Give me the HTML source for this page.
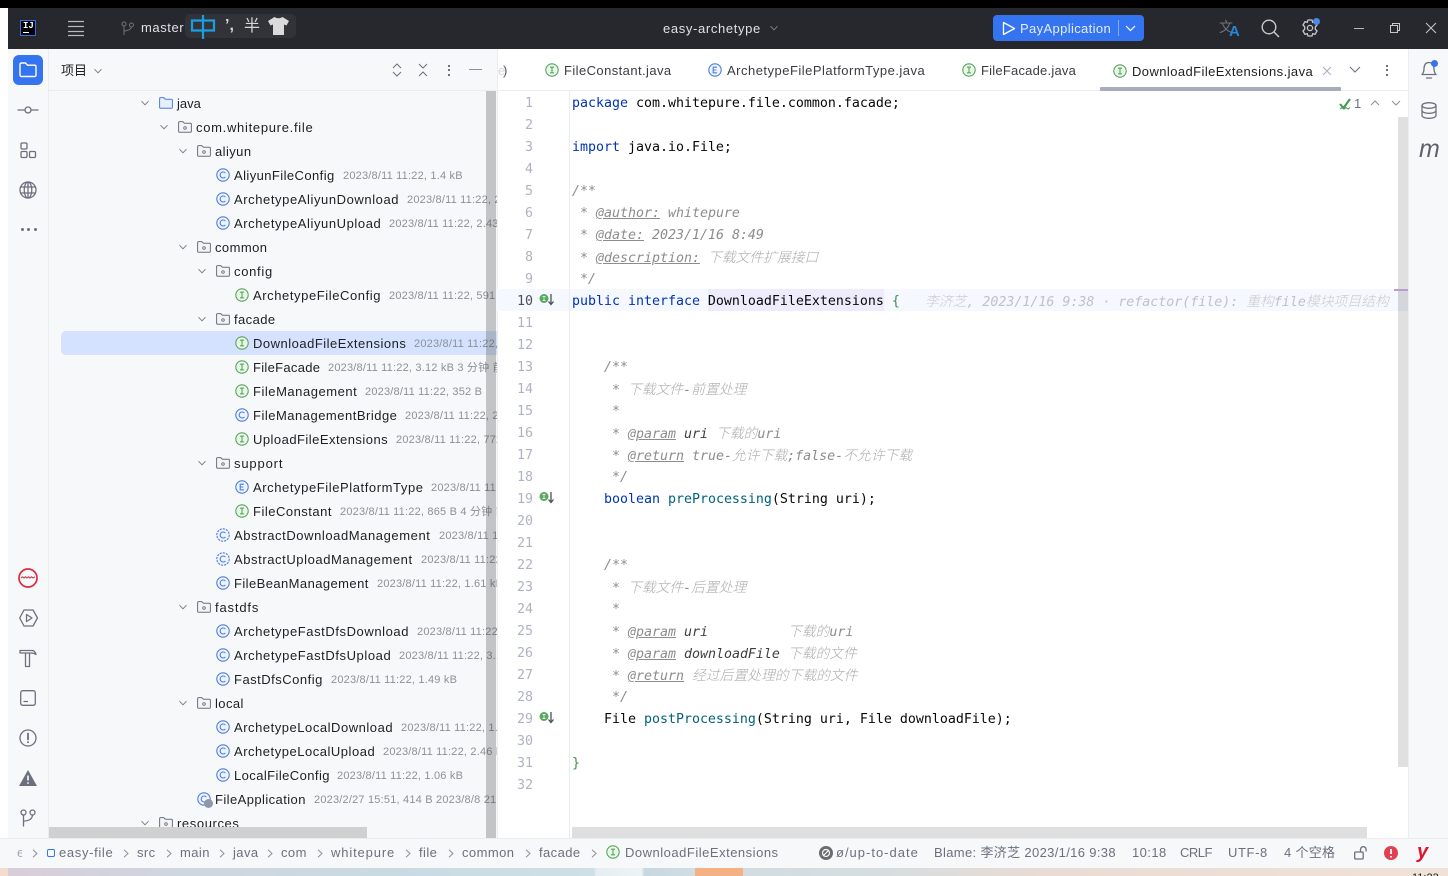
<!DOCTYPE html>
<html lang="zh"><head><meta charset="utf-8"><title>easy-archetype</title>
<style>
*{box-sizing:border-box}
html,body{margin:0;padding:0;width:1448px;height:876px;overflow:hidden;background:#fff}
body{position:relative;font-family:"Liberation Sans","Noto Sans CJK SC",sans-serif;font-size:13px;color:#1e1f22}
.a{position:absolute}
.t{position:absolute;white-space:nowrap;letter-spacing:.42px;line-height:24px;height:24px;margin-top:1px}
svg{position:absolute;overflow:visible}
.s{fill:none;stroke:#6c707e;stroke-width:1.3;stroke-linecap:round;stroke-linejoin:round}
#tree{position:absolute;left:49px;top:91px;width:448px;height:747px;overflow:hidden;background:#f7f8fa}
#tree .t{margin-left:-49px;margin-top:-90px}
#tree svg{margin-left:-49px;margin-top:-91px}
#tree .m{color:#8d9097;font-size:11px;letter-spacing:.2px}
#tree .w{letter-spacing:.58px}
.l{position:absolute;left:572px;height:22px;white-space:pre;font:13.29px/22px "DejaVu Sans Mono","Noto Sans CJK SC",monospace;color:#080808;margin-top:2px}
.n{position:absolute;left:505px;width:28px;text-align:right;font:13.29px/22px "DejaVu Sans Mono",monospace;color:#aeb3c2;margin-top:2px}
.k{color:#0033b3}.f{color:#00627a}
.c{color:#8c8c8c;font-style:italic}
.g{color:#8c8c8c;font-style:italic;text-decoration:underline}
.u{color:#3d3d3d;font-style:italic}
.z{font-size:13.8px;color:#adadad;font-weight:300}
.st{position:absolute;white-space:nowrap;top:838px;height:30px;line-height:30px;font-size:13px;color:#6c707e;letter-spacing:.42px}
.cv{position:absolute;top:849px;width:6px;height:9px}
</style></head><body>
<svg width="0" height="0" style="position:absolute">
<defs>
<symbol id="ci" viewBox="0 0 14 14"><circle cx="7" cy="7" r="6.200" fill="#eaf6ea" stroke="#58a65c" stroke-width="1.100"/><path d="M5 4.200h4M7 4.200v5.600M5 9.800h4" stroke="#58a65c" fill="none" stroke-width="1.100"/></symbol>
<symbol id="cc" viewBox="0 0 14 14"><circle cx="7" cy="7" r="6.200" fill="#eef3ff" stroke="#4d7fd8" stroke-width="1.100"/><path d="M9.400 5A3 3 0 1 0 9.400 9" stroke="#4d7fd8" fill="none" stroke-width="1.100"/></symbol>
<symbol id="ca" viewBox="0 0 14 14"><circle cx="7" cy="7" r="6.200" fill="#eef3ff" stroke="#4d7fd8" stroke-width="1.100" stroke-dasharray="2.200 1"/><path d="M9.400 5A3 3 0 1 0 9.400 9" stroke="#4d7fd8" fill="none" stroke-width="1.100"/></symbol>
<symbol id="ce" viewBox="0 0 14 14"><circle cx="7" cy="7" r="6.200" fill="#eef3ff" stroke="#4d7fd8" stroke-width="1.100"/><path d="M9 4.200H5.200v5.600H9M5.200 7h3.200" stroke="#4d7fd8" fill="none" stroke-width="1.100"/></symbol>
<symbol id="fd" viewBox="0 0 14 14"><path d="M.6 11.200V2.600q0-1 1-1h3.200l1.600 1.600h6q1 0 1 1v7q0 1-1 1H1.600q-1 0-1-1z" fill="#f3f4f6" stroke="#6c707e" stroke-width="1"/><circle cx="7" cy="8" r="1.300" fill="none" stroke="#6c707e" stroke-width=".9"/></symbol>
<symbol id="fj" viewBox="0 0 14 14"><path d="M.6 11.200V2.600q0-1 1-1h3.200l1.600 1.600h6q1 0 1 1v7q0 1-1 1H1.600q-1 0-1-1z" fill="#e7effd" stroke="#4d7fd8" stroke-width="1"/></symbol>
<symbol id="dn" viewBox="0 0 10 10"><path d="M1.500 3.200 5 6.800l3.500-3.600" fill="none" stroke="#7c7f88" stroke-width="1"/></symbol>
<symbol id="rt" viewBox="0 0 6 9"><path d="M1 .8 5 4.500 1 8.200" fill="none" stroke="#8c8f98" stroke-width="1"/></symbol>
</defs></svg>

<!-- top black edge & title bar -->
<div class="a" style="left:0;top:0;width:1448px;height:8px;background:#000"></div>
<div class="a" style="left:8px;top:8px;width:1440px;height:41px;background:#26282e"></div>
<div class="a" style="left:20px;top:20px;width:16px;height:16px;background:#000;border:1px solid #2f6fe0"></div>
<div class="a" style="left:23px;top:20px;color:#fff;font:bold 9px/13px 'Liberation Mono',monospace;letter-spacing:0">IJ</div>
<div class="a" style="left:23px;top:32px;width:6px;height:1px;background:#fff"></div>
<svg style="left:68px;top:20px" width="16" height="16"><path d="M0 1.500h16M0 6.500h16M0 11.500h16M0 15.500h16" stroke="#b4b8bf" stroke-width="1.200" fill="none"/></svg>
<svg style="left:121px;top:21px" width="13" height="15"><g style="stroke:#6f737a;fill:none;stroke-width:1"><circle cx="3" cy="3" r="2"/><circle cx="10.500" cy="4" r="2"/><path d="M3 5v9M3 10q6.500-.5 7.500-4"/></g></svg>
<div class="t" style="left:141px;top:15px;color:#dfe1e5;letter-spacing:.58px">master</div>
<div class="a" style="left:185px;top:14px;width:111px;height:24px;background:#313338;border-radius:5px"></div>
<svg style="left:190px;top:14px" width="26" height="26"><path d="M2 6.500h22v10H2zM13 1v24" fill="none" stroke="#1b9fe0" stroke-width="2.200"/></svg>
<div class="a" style="left:225px;top:14px;color:#d8d8d8;font-size:16px;line-height:24px;font-weight:bold">&#8217;,</div>
<div class="a" style="left:244px;top:16px;color:#d8d8d8;font-size:16px;line-height:22px">半</div>
<svg style="left:268px;top:17px" width="21" height="18"><path d="M6.500 0 0 4l2.500 4.500 2.500-1V18h11V7.500l2.500 1L21 4l-6.500-4q-4 2.500-8 0z" fill="#dadada"/></svg>
<div class="t" style="left:663px;top:16px;color:#dfe1e5;letter-spacing:.64px">easy-archetype</div>
<svg style="left:769px;top:23px" width="10" height="10"><use href="#dn"/></svg>
<div class="a" style="left:993px;top:15px;width:151px;height:26px;background:#3574f0;border-radius:4px"></div>
<svg style="left:1002px;top:21px" width="14" height="15"><path d="M1.500 1.500v12l11-6z" fill="none" stroke="#fff" stroke-width="1.300" stroke-linejoin="round"/></svg>
<div class="t" style="left:1020px;top:16px;color:#e4ecfd;letter-spacing:.36px">PayApplication</div>
<div class="a" style="left:1118px;top:20px;width:1px;height:16px;background:#85a9f3"></div>
<svg style="left:1125px;top:23px" width="11" height="11"><path d="M1 3l4.500 4.500L10 3" fill="none" stroke="#fff" stroke-width="1.200"/></svg>
<div class="a" style="left:1219px;top:18px;color:#6f737a;font-size:14px;line-height:18px">文</div>
<div class="a" style="left:1229px;top:24px;color:#2187d6;font:bold 15px/16px 'Liberation Sans',sans-serif">A</div>
<svg style="left:1261px;top:19px" width="19" height="19"><circle cx="8" cy="8" r="6.800" fill="none" stroke="#c5c8ce" stroke-width="1.400"/><path d="M13 13l5 5" stroke="#c5c8ce" stroke-width="1.500"/></svg>
<svg style="left:1301px;top:19px" width="18" height="18"><path d="M7 1h4l.7 2.400 2.300-.8 2 3.400-1.700 1.800 0 2.400 1.700 1.800-2 3.400-2.300-.8L11 17H7l-.7-2.400-2.300.8-2-3.400 1.700-1.800 0-2.400L2 6l2-3.400 2.300.8z" fill="none" stroke="#c5c8ce" stroke-width="1.300" stroke-linejoin="round"/><circle cx="9" cy="9" r="2.600" fill="none" stroke="#c5c8ce" stroke-width="1.300"/></svg>
<div class="a" style="left:1313px;top:18px;width:7px;height:7px;background:#4d8ae8;border-radius:50%"></div>
<div class="a" style="left:1354px;top:28px;width:10px;height:1px;background:#b4b8bf"></div>
<svg style="left:1390px;top:23px" width="10" height="10"><path d="M.5 2.500h7v7h-7zM2.500 2.500V.5h7v7H7.500" fill="none" stroke="#c5c8ce"/></svg>
<svg style="left:1426px;top:23px" width="10" height="10"><path d="M0 0l10 10M10 0L0 10" stroke="#c5c8ce" stroke-width="1"/></svg>

<!-- left tool strip -->
<div class="a" style="left:8px;top:49px;width:41px;height:789px;background:#f7f8fa;border-right:1px solid #ebecf0"></div>
<div class="a" style="left:13px;top:55px;width:30px;height:30px;background:#3574f0;border-radius:6px"></div>
<svg style="left:19px;top:62px" width="18" height="16"><path d="M1 13V2.500Q1 1 2.500 1h4l2 2.200h7Q17 3.200 17 4.700V13q0 1.500-1.500 1.500h-13Q1 14.500 1 13z" fill="none" stroke="#fff" stroke-width="1.400"/></svg>
<svg style="left:18px;top:103px" width="20" height="14" class="s"><path d="M0 7h6.500M13.500 7H20"/><circle cx="10" cy="7" r="3"/></svg>
<svg style="left:20px;top:142px" width="16" height="16" class="s"><rect x="1" y="1" width="6" height="6" rx="1.200"/><rect x="1" y="9.500" width="6" height="6" rx="1.200"/><rect x="9.500" y="9.500" width="6" height="6" rx="1.200"/></svg>
<svg style="left:19px;top:181px" width="18" height="18" class="s"><circle cx="9" cy="9" r="8"/><ellipse cx="9" cy="9" rx="3.800" ry="8"/><path d="M1.500 6h15M1.500 12h15M9 1v16"/></svg>
<div class="a" style="left:21px;top:228px;width:3px;height:3px;background:#6c707e;border-radius:50%;box-shadow:6px 0 #6c707e,13px 0 #6c707e"></div>
<svg style="left:18px;top:568px" width="20" height="20"><circle cx="10" cy="10" r="9" fill="none" stroke="#d5303f" stroke-width="1.700"/><path d="M3 10l1.500-1.200L6 10l1.500-1.200L9 10l1.500-1.200L12 10l1.500-1.200L15 10l2-1.200" fill="none" stroke="#d5303f" stroke-width="1"/></svg>
<svg style="left:19px;top:609px" width="19" height="18" class="s"><path d="M5 1h9l4.500 8-4.500 8H5L.7 9z"/><path d="M7.500 5.500v7l5.500-3.500z"/></svg>
<svg style="left:19px;top:648px" width="18" height="20" class="s"><path d="M1 2.500h12q3 0 4 4q-2-1.500-5-1.500H1zM6.500 5v13.500h4V5"/></svg>
<svg style="left:20px;top:690px" width="16" height="16" class="s"><rect x=".7" y=".7" width="14.600" height="14.600" rx="2"/><path d="M4 11.500h3.500"/></svg>
<svg style="left:19px;top:729px" width="18" height="18" class="s"><circle cx="9" cy="9" r="8"/><path d="M9 4.500v6M9 13v.4" stroke-width="1.800"/></svg>
<svg style="left:19px;top:770px" width="18" height="16"><path d="M9 0l9 16H0z" fill="#6c707e"/><path d="M9 5.500v5M9 12.300v1.400" stroke="#fff" stroke-width="1.600"/></svg>
<svg style="left:20px;top:809px" width="16" height="18" class="s"><circle cx="3.500" cy="3.500" r="2.500"/><circle cx="12.500" cy="3.500" r="2.500"/><path d="M3.500 6v11M3.500 12q8.500 0 9-6"/></svg>

<!-- project header -->
<div class="a" style="left:49px;top:49px;width:448px;height:42px;background:#f7f8fa;border-bottom:1px solid #ebecf0"></div>
<div class="a" style="left:61px;top:61px;font-size:13px;line-height:20px;color:#1e1f22">项目</div>
<svg style="left:93px;top:66px" width="10" height="10"><use href="#dn"/></svg>
<svg style="left:392px;top:63px" width="10" height="14"><path d="M1 5l4-4 4 4M1 9l4 4 4-4" fill="none" stroke="#6c707e"/></svg>
<svg style="left:418px;top:63px" width="10" height="14"><path d="M1 1l4 4 4-4M1 13l4-4 4 4" fill="none" stroke="#6c707e"/></svg>
<div class="a" style="left:448px;top:65px;width:2px;height:2px;background:#6c707e;box-shadow:0 4px #6c707e,0 9px #6c707e"></div>
<div class="a" style="left:469px;top:69px;width:13px;height:1px;background:#8c8f98"></div>

<!-- tree -->
<div id="tree">
<div class="t" style="left:61px;top:331px;width:436px;height:24px;background:#d4e2ff;border-radius:5px 0 0 5px;margin-top:-91px"></div>

<svg style="left:140px;top:98px" width="10" height="10"><use href="#dn"/></svg><svg style="left:159px;top:96px" width="14" height="14"><use href="#fj"/></svg><div class="t" style="left:177px;top:91px;letter-spacing:0">java</div>
<svg style="left:159px;top:122px" width="10" height="10"><use href="#dn"/></svg><svg style="left:178px;top:120px" width="14" height="14"><use href="#fd"/></svg><div class="t" style="left:196px;top:115px;letter-spacing:.7px">com.whitepure.file</div>
<svg style="left:178px;top:146px" width="10" height="10"><use href="#dn"/></svg><svg style="left:197px;top:144px" width="14" height="14"><use href="#fd"/></svg><div class="t" style="left:215px;top:139px">aliyun</div>

<svg style="left:216px;top:168px" width="14" height="14"><use href="#cc"/></svg><div class="t" style="left:234px;top:163px">AliyunFileConfig</div><div class="t m" style="left:343px;top:163px">2023/8/11 11:22, 1.4 kB</div>
<svg style="left:216px;top:192px" width="14" height="14"><use href="#cc"/></svg><div class="t w" style="left:234px;top:187px">ArchetypeAliyunDownload</div><div class="t m" style="left:407px;top:187px">2023/8/11 11:22, 2.03 kB</div>
<svg style="left:216px;top:216px" width="14" height="14"><use href="#cc"/></svg><div class="t w" style="left:234px;top:211px">ArchetypeAliyunUpload</div><div class="t m" style="left:389px;top:211px">2023/8/11 11:22, 2.43 kB</div>

<svg style="left:178px;top:242px" width="10" height="10"><use href="#dn"/></svg><svg style="left:197px;top:240px" width="14" height="14"><use href="#fd"/></svg><div class="t" style="left:215px;top:235px">common</div>
<svg style="left:197px;top:266px" width="10" height="10"><use href="#dn"/></svg><svg style="left:216px;top:264px" width="14" height="14"><use href="#fd"/></svg><div class="t" style="left:234px;top:259px;letter-spacing:.7px">config</div>
<svg style="left:235px;top:288px" width="14" height="14"><use href="#ci"/></svg><div class="t w" style="left:253px;top:283px">ArchetypeFileConfig</div><div class="t m" style="left:389px;top:283px">2023/8/11 11:22, 591 B</div>
<svg style="left:197px;top:314px" width="10" height="10"><use href="#dn"/></svg><svg style="left:216px;top:312px" width="14" height="14"><use href="#fd"/></svg><div class="t" style="left:234px;top:307px">facade</div>
<svg style="left:235px;top:336px" width="14" height="14"><use href="#ci"/></svg><div class="t" style="left:253px;top:331px;letter-spacing:.5px">DownloadFileExtensions</div><div class="t m" style="left:414px;top:331px">2023/8/11 11:22, 1.2 kB</div>
<svg style="left:235px;top:360px" width="14" height="14"><use href="#ci"/></svg><div class="t" style="left:253px;top:355px;letter-spacing:.3px">FileFacade</div><div class="t m" style="left:328px;top:355px">2023/8/11 11:22, 3.12 kB 3 分钟 前</div>
<svg style="left:235px;top:384px" width="14" height="14"><use href="#ci"/></svg><div class="t" style="left:253px;top:379px;letter-spacing:.53px">FileManagement</div><div class="t m" style="left:365px;top:379px">2023/8/11 11:22, 352 B</div>
<svg style="left:235px;top:408px" width="14" height="14"><use href="#cc"/></svg><div class="t" style="left:253px;top:403px;letter-spacing:.5px">FileManagementBridge</div><div class="t m" style="left:405px;top:403px">2023/8/11 11:22, 2.1 kB</div>
<svg style="left:235px;top:432px" width="14" height="14"><use href="#ci"/></svg><div class="t" style="left:253px;top:427px;letter-spacing:.47px">UploadFileExtensions</div><div class="t m" style="left:396px;top:427px">2023/8/11 11:22, 772 B</div>
<svg style="left:197px;top:458px" width="10" height="10"><use href="#dn"/></svg><svg style="left:216px;top:456px" width="14" height="14"><use href="#fd"/></svg><div class="t" style="left:234px;top:451px;letter-spacing:.85px">support</div>
<svg style="left:235px;top:480px" width="14" height="14"><use href="#ce"/></svg><div class="t w" style="left:253px;top:475px">ArchetypeFilePlatformType</div><div class="t m" style="left:431px;top:475px">2023/8/11 11:22, 1 kB</div>
<svg style="left:235px;top:504px" width="14" height="14"><use href="#ci"/></svg><div class="t" style="left:253px;top:499px;letter-spacing:.5px">FileConstant</div><div class="t m" style="left:340px;top:499px">2023/8/11 11:22, 865 B 4 分钟 前</div>
<svg style="left:216px;top:528px" width="14" height="14"><use href="#ca"/></svg><div class="t w" style="left:234px;top:523px">AbstractDownloadManagement</div><div class="t m" style="left:439px;top:523px">2023/8/11 11:22</div>
<svg style="left:216px;top:552px" width="14" height="14"><use href="#ca"/></svg><div class="t w" style="left:234px;top:547px">AbstractUploadManagement</div><div class="t m" style="left:421px;top:547px">2023/8/11 11:22</div>
<svg style="left:216px;top:576px" width="14" height="14"><use href="#cc"/></svg><div class="t" style="left:234px;top:571px">FileBeanManagement</div><div class="t m" style="left:377px;top:571px">2023/8/11 11:22, 1.61 kB</div>
<svg style="left:178px;top:602px" width="10" height="10"><use href="#dn"/></svg><svg style="left:197px;top:600px" width="14" height="14"><use href="#fd"/></svg><div class="t" style="left:215px;top:595px;letter-spacing:.85px">fastdfs</div>
<svg style="left:216px;top:624px" width="14" height="14"><use href="#cc"/></svg><div class="t w" style="left:234px;top:619px">ArchetypeFastDfsDownload</div><div class="t m" style="left:417px;top:619px">2023/8/11 11:22, 2 kB</div>
<svg style="left:216px;top:648px" width="14" height="14"><use href="#cc"/></svg><div class="t w" style="left:234px;top:643px">ArchetypeFastDfsUpload</div><div class="t m" style="left:399px;top:643px">2023/8/11 11:22, 3.1 kB</div>
<svg style="left:216px;top:672px" width="14" height="14"><use href="#cc"/></svg><div class="t" style="left:234px;top:667px;letter-spacing:.5px">FastDfsConfig</div><div class="t m" style="left:331px;top:667px">2023/8/11 11:22, 1.49 kB</div>
<svg style="left:178px;top:698px" width="10" height="10"><use href="#dn"/></svg><svg style="left:197px;top:696px" width="14" height="14"><use href="#fd"/></svg><div class="t" style="left:215px;top:691px">local</div>
<svg style="left:216px;top:720px" width="14" height="14"><use href="#cc"/></svg><div class="t" style="left:234px;top:715px;letter-spacing:.53px">ArchetypeLocalDownload</div><div class="t m" style="left:401px;top:715px">2023/8/11 11:22, 1.9 kB</div>
<svg style="left:216px;top:744px" width="14" height="14"><use href="#cc"/></svg><div class="t" style="left:234px;top:739px;letter-spacing:.52px">ArchetypeLocalUpload</div><div class="t m" style="left:383px;top:739px">2023/8/11 11:22, 2.46 kB</div>
<svg style="left:216px;top:768px" width="14" height="14"><use href="#cc"/></svg><div class="t" style="left:234px;top:763px">LocalFileConfig</div><div class="t m" style="left:337px;top:763px">2023/8/11 11:22, 1.06 kB</div>
<svg style="left:197px;top:792px" width="14" height="14"><use href="#cc"/></svg><div class="a" style="left:155px;top:708px;width:9px;height:9px;background:#8f98a8;border-radius:50%"></div><div class="t" style="left:215px;top:787px">FileApplication</div><div class="t m" style="left:314px;top:787px">2023/2/27 15:51, 414 B 2023/8/8 21:00</div>
<svg style="left:140px;top:818px" width="10" height="10"><use href="#dn"/></svg><svg style="left:159px;top:816px" width="14" height="14"><use href="#fd"/></svg><div class="t" style="left:177px;top:811px;letter-spacing:.6px">resources</div>

<div class="a" style="left:437px;top:0;width:10px;height:747px;background:rgba(60,60,60,.28)"></div>
<div class="a" style="left:0;top:736px;width:318px;height:11px;background:#d0d0d0"></div>
</div>

<!-- tabs -->
<div class="a" style="left:497px;top:49px;width:911px;height:42px;background:#fff;border-bottom:1px solid #ebecf0;border-left:1px solid #ebecf0"></div>
<div class="t" style="left:498px;top:58px;color:#d5d6d9">e</div><div class="t" style="left:503px;top:58px;color:#55585f">)</div>
<svg style="left:545px;top:63px" width="14" height="14"><use href="#ci"/></svg><div class="t" style="left:564px;top:58px;color:#3a3c42">FileConstant.java</div>
<svg style="left:708px;top:63px" width="14" height="14"><use href="#ce"/></svg><div class="t" style="left:727px;top:58px;color:#3a3c42;letter-spacing:.49px">ArchetypeFilePlatformType.java</div>
<svg style="left:962px;top:63px" width="14" height="14"><use href="#ci"/></svg><div class="t" style="left:981px;top:58px;color:#3a3c42;letter-spacing:.22px">FileFacade.java</div>
<svg style="left:1113px;top:64px" width="14" height="14"><use href="#ci"/></svg><div class="t" style="left:1132px;top:59px">DownloadFileExtensions.java</div>
<svg style="left:1323px;top:67px" width="8" height="8"><path d="M0 0l8 8M8 0L0 8" stroke="#a8adbd"/></svg>
<svg style="left:1349px;top:64px" width="12" height="12"><path d="M1 3l5 5 5-5" fill="none" stroke="#6c707e" stroke-width="1.100"/></svg>
<div class="a" style="left:1386px;top:65px;width:2px;height:2px;background:#6c707e;box-shadow:0 4px #6c707e,0 9px #6c707e"></div>
<div class="a" style="left:1100px;top:87px;width:241px;height:4px;background:#a8adbd;border-radius:1px"></div>

<!-- editor -->
<div class="a" style="left:497px;top:91px;width:911px;height:747px;background:#fff;border-left:1px solid #ebecf0"></div>
<div class="a" style="left:497px;top:289px;width:911px;height:22px;background:#f5f8fe"></div>
<div class="a" style="left:569px;top:91px;width:1px;height:747px;background:#ebecf0"></div>
<div class="a" style="left:708px;top:289px;width:176px;height:22px;background:#edebfc"></div>

<div class="n" style="top:91px">1</div><div class="n" style="top:113px">2</div><div class="n" style="top:135px">3</div><div class="n" style="top:157px">4</div><div class="n" style="top:179px">5</div><div class="n" style="top:201px">6</div><div class="n" style="top:223px">7</div><div class="n" style="top:245px">8</div><div class="n" style="top:267px">9</div><div class="n" style="top:289px;color:#4c4f58">10</div><div class="n" style="top:311px">11</div><div class="n" style="top:333px">12</div><div class="n" style="top:355px">13</div><div class="n" style="top:377px">14</div><div class="n" style="top:399px">15</div><div class="n" style="top:421px">16</div><div class="n" style="top:443px">17</div><div class="n" style="top:465px">18</div><div class="n" style="top:487px">19</div><div class="n" style="top:509px">20</div><div class="n" style="top:531px">21</div><div class="n" style="top:553px">22</div><div class="n" style="top:575px">23</div><div class="n" style="top:597px">24</div><div class="n" style="top:619px">25</div><div class="n" style="top:641px">26</div><div class="n" style="top:663px">27</div><div class="n" style="top:685px">28</div><div class="n" style="top:707px">29</div><div class="n" style="top:729px">30</div><div class="n" style="top:751px">31</div><div class="n" style="top:773px">32</div>

<svg style="left:539px;top:293px" width="16" height="13"><circle cx="5" cy="5.500" r="4.500" fill="#5aa85e"/><path d="M3.500 3.500h3M5 3.500v4M3.500 7.500h3" stroke="#dff0df" stroke-width=".9" fill="none"/><path d="M12 1v10M9.500 8.500 12 11.500l2.500-3" stroke="#4c5058" stroke-width="1.300" fill="none"/></svg>
<svg style="left:539px;top:491px" width="16" height="13"><circle cx="5" cy="5.500" r="4.500" fill="#5aa85e"/><path d="M3.500 3.500h3M5 3.500v4M3.500 7.500h3" stroke="#dff0df" stroke-width=".9" fill="none"/><path d="M12 1v10M9.500 8.500 12 11.500l2.500-3" stroke="#4c5058" stroke-width="1.300" fill="none"/></svg>
<svg style="left:539px;top:711px" width="16" height="13"><circle cx="5" cy="5.500" r="4.500" fill="#5aa85e"/><path d="M3.500 3.500h3M5 3.500v4M3.500 7.500h3" stroke="#dff0df" stroke-width=".9" fill="none"/><path d="M12 1v10M9.500 8.500 12 11.500l2.500-3" stroke="#4c5058" stroke-width="1.300" fill="none"/></svg>

<div class="l" style="top:91px"><span class="k">package</span> com.whitepure.file.common.facade;</div>
<div class="l" style="top:135px"><span class="k">import</span> java.io.File;</div>
<div class="l c" style="top:179px">/**</div>
<div class="l c" style="top:201px"> * <span class="g">@author:</span> whitepure</div>
<div class="l c" style="top:223px"> * <span class="g">@date:</span> 2023/1/16 8:49</div>
<div class="l c" style="top:245px"> * <span class="g">@description:</span> <span class="z">下载文件扩展接口</span></div>
<div class="l c" style="top:267px"> */</div>
<div class="l" style="top:289px"><span class="k">public interface</span> DownloadFileExtensions <span style="color:#3f8f4a">{</span></div>
<div class="l c" style="top:355px">    /**</div>
<div class="l c" style="top:377px">     * <span class="z">下载文件</span>-<span class="z">前置处理</span></div>
<div class="l c" style="top:399px">     *</div>
<div class="l c" style="top:421px">     * <span class="g">@param</span> <span class="u">uri</span> <span class="z">下载的</span>uri</div>
<div class="l c" style="top:443px">     * <span class="g">@return</span> true-<span class="z">允许下载</span>;false-<span class="z">不允许下载</span></div>
<div class="l c" style="top:465px">     */</div>
<div class="l" style="top:487px">    <span class="k">boolean</span> <span class="f">preProcessing</span>(String uri);</div>
<div class="l c" style="top:553px">    /**</div>
<div class="l c" style="top:575px">     * <span class="z">下载文件</span>-<span class="z">后置处理</span></div>
<div class="l c" style="top:597px">     *</div>
<div class="l c" style="top:619px">     * <span class="g">@param</span> <span class="u">uri</span>          <span class="z">下载的</span>uri</div>
<div class="l c" style="top:641px">     * <span class="g">@param</span> <span class="u">downloadFile</span> <span class="z">下载的文件</span></div>
<div class="l c" style="top:663px">     * <span class="g">@return</span> <span class="z">经过后置处理的下载的文件</span></div>
<div class="l c" style="top:685px">     */</div>
<div class="l" style="top:707px">    File <span class="f">postProcessing</span>(String uri, File downloadFile);</div>
<div class="l" style="top:751px"><span style="color:#3f8f4a">}</span></div>
<div class="l" style="left:925px;top:289px;color:#bfc1c5;font-style:italic"><span class="z" style="color:#c8cacd">李济芝</span>, 2023/1/16 9:38 · refactor(file): <span class="z" style="color:#c8cacd">重构</span>file<span class="z" style="color:#c8cacd">模块项目结构</span></div>

<svg style="left:1339px;top:98px" width="13" height="14"><path d="M1 6l3.500 4L11 1" fill="none" stroke="#3d9a50" stroke-width="2"/><path d="M1 11l2-1.500 2 1.500 2-1.500 2 1.500 2-1.500" fill="none" stroke="#3d9a50" stroke-width=".9"/></svg>
<div class="a" style="left:1354px;top:94px;font-size:13px;line-height:20px;color:#6c707e">1</div>
<svg style="left:1370px;top:99px" width="10" height="8"><path d="M1 6l4-4 4 4" fill="none" stroke="#8c8f98"/></svg>
<svg style="left:1391px;top:99px" width="10" height="8"><path d="M1 2l4 4 4-4" fill="none" stroke="#8c8f98"/></svg>

<div class="a" style="left:1398px;top:117px;width:10px;height:650px;background:#e0e0e0"></div>
<div class="a" style="left:1398px;top:289px;width:10px;height:22px;background:#d5d5dc"></div>
<div class="a" style="left:1394px;top:289px;width:14px;height:2px;background:#b99bd6"></div>
<div class="a" style="left:572px;top:827px;width:795px;height:11px;background:#dfdfdf"></div>

<!-- right strip -->
<div class="a" style="left:1408px;top:49px;width:40px;height:789px;background:#f7f8fa;border-left:1px solid #ebecf0"></div>
<svg style="left:1421px;top:60px" width="16" height="20" class="s"><path d="M1 14.500q2-2 2-6Q3.300 2.500 8 2.500t5 6q0 4 2 6zM5.500 18h5"/></svg>
<div class="a" style="left:1431px;top:60px;width:7px;height:7px;border-radius:50%;background:#3574f0"></div>
<svg style="left:1421px;top:102px" width="16" height="17" class="s"><ellipse cx="8" cy="3.500" rx="7" ry="2.800"/><path d="M1 3.500v10c0 1.500 3 2.800 7 2.800s7-1.300 7-2.800v-10M1 8.500c0 1.500 3 2.800 7 2.800s7-1.300 7-2.800"/></svg>
<div class="a" style="left:1419px;top:136px;font:italic 25px/26px 'Liberation Sans',sans-serif;color:#5f626b">m</div>

<!-- status bar -->
<div class="a" style="left:0;top:838px;width:1448px;height:30px;background:#f7f8fa;border-top:1px solid #ebecf0"></div>
<div class="st" style="left:17px;color:#a4a7ae;width:5px;overflow:hidden">e</div>
<svg class="cv" style="left:32px"><use href="#rt"/></svg>
<div class="a" style="left:47px;top:849px;width:8px;height:8px;border:1.300px solid #3574f0;border-radius:2px"></div>
<div class="st" style="left:59px;letter-spacing:.66px">easy-file</div><svg class="cv" style="left:123px"><use href="#rt"/></svg>
<div class="st" style="left:137px">src</div><svg class="cv" style="left:166px"><use href="#rt"/></svg>
<div class="st" style="left:180px">main</div><svg class="cv" style="left:219px"><use href="#rt"/></svg>
<div class="st" style="left:233px">java</div><svg class="cv" style="left:267px"><use href="#rt"/></svg>
<div class="st" style="left:281px">com</div><svg class="cv" style="left:317px"><use href="#rt"/></svg>
<div class="st" style="left:331px;letter-spacing:.86px">whitepure</div><svg class="cv" style="left:405px"><use href="#rt"/></svg>
<div class="st" style="left:419px">file</div><svg class="cv" style="left:448px"><use href="#rt"/></svg>
<div class="st" style="left:462px">common</div><svg class="cv" style="left:525px"><use href="#rt"/></svg>
<div class="st" style="left:539px">facade</div><svg class="cv" style="left:591px"><use href="#rt"/></svg>
<svg style="left:606px;top:845px" width="14" height="14"><use href="#ci"/></svg>
<div class="st" style="left:625px;letter-spacing:.51px">DownloadFileExtensions</div>
<svg style="left:819px;top:846px" width="14" height="14"><circle cx="7" cy="7" r="7" fill="#6c6c6c"/><circle cx="7" cy="7" r="3.500" fill="none" stroke="#f7f8fa" stroke-width="1.200"/><path d="M4 10l6-6" stroke="#f7f8fa" stroke-width="1.200"/></svg>
<div class="st" style="left:836px;letter-spacing:1px">ø/up-to-date</div>
<div class="st" style="left:934px;letter-spacing:.34px">Blame: 李济芝 2023/1/16 9:38</div>
<div class="st" style="left:1132px">10:18</div>
<div class="st" style="left:1180px;letter-spacing:-.5px">CRLF</div>
<div class="st" style="left:1228px;letter-spacing:.6px">UTF-8</div>
<div class="st" style="left:1284px;letter-spacing:.3px">4 个空格</div>
<svg style="left:1354px;top:846px" width="14" height="14" class="s"><rect x=".7" y="6" width="8.500" height="7" rx="1"/><path d="M6.500 6V3.500a2.800 2.800 0 0 1 5.600 0V5"/></svg>
<svg style="left:1384px;top:846px" width="14" height="14"><circle cx="7" cy="7" r="7" fill="#e0404f"/><path d="M7 3v5M7 10v1.500" stroke="#fff" stroke-width="1.800"/></svg>
<div class="a" style="left:1417px;top:842px;color:#e0142c;font:italic bold 20px/20px 'Liberation Sans',sans-serif">y</div>

<!-- wallpaper strip -->
<div class="a" style="left:0;top:868px;width:1448px;height:8px;background:linear-gradient(90deg,#d9cdd8 0,#cfd6df 12%,#c9dbe4 30%,#cfdfe6 41%,#e6eef2 41.200%,#edf3f5 44.300%,#c8d8e0 44.500%,#d0dde3 48%,#d5dde0 60%,#e8dcd4 72%,#f0e2d8 100%)"></div>
<div class="a" style="left:695px;top:868px;width:48px;height:8px;background:#f4b183"></div>
<div class="a" style="left:0;top:868px;width:8px;height:8px;background:#f3ddcf"></div>
<div class="a" style="left:1412px;top:871px;font-size:11px;line-height:14px;color:#222;height:5px;overflow:hidden">11:23</div>
</body></html>
